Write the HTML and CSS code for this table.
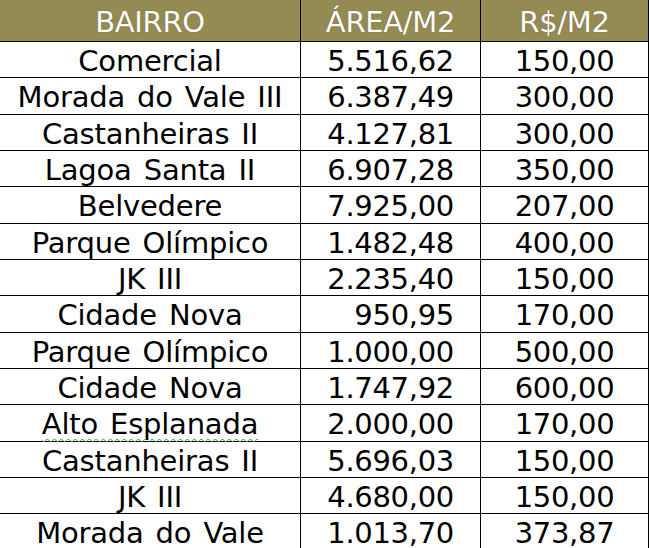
FILE: index.html
```html
<!DOCTYPE html>
<html lang="pt-BR">
<head>
<meta charset="utf-8">
<title>Bairros</title>
<link rel="stylesheet" href="styles.css">
</head>
<body>
<div class="sheet">
  <div class="cell head">BAIRRO</div>
  <div class="cell head">ÁREA/M2</div>
  <div class="cell head">R$/M2</div>

  <div class="cell name">Comercial</div><div class="cell area">5.516,62</div><div class="cell price">150,00</div>
  <div class="cell name">Morada do Vale III</div><div class="cell area">6.387,49</div><div class="cell price">300,00</div>
  <div class="cell name">Castanheiras II</div><div class="cell area">4.127,81</div><div class="cell price">300,00</div>
  <div class="cell name">Lagoa Santa II</div><div class="cell area">6.907,28</div><div class="cell price">350,00</div>
  <div class="cell name">Belvedere</div><div class="cell area">7.925,00</div><div class="cell price">207,00</div>
  <div class="cell name">Parque Olímpico</div><div class="cell area">1.482,48</div><div class="cell price">400,00</div>
  <div class="cell name">JK III</div><div class="cell area">2.235,40</div><div class="cell price">150,00</div>
  <div class="cell name">Cidade Nova</div><div class="cell area">950,95</div><div class="cell price">170,00</div>
  <div class="cell name">Parque Olímpico</div><div class="cell area">1.000,00</div><div class="cell price">500,00</div>
  <div class="cell name">Cidade Nova</div><div class="cell area">1.747,92</div><div class="cell price">600,00</div>
  <div class="cell name"><span class="spell">Alto Esplanada</span></div><div class="cell area">2.000,00</div><div class="cell price">170,00</div>
  <div class="cell name">Castanheiras II</div><div class="cell area">5.696,03</div><div class="cell price">150,00</div>
  <div class="cell name">JK III</div><div class="cell area">4.680,00</div><div class="cell price">150,00</div>
  <div class="cell name">Morada do Vale</div><div class="cell area">1.013,70</div><div class="cell price">373,87</div>
</div>
</body>
</html>
```
FILE: styles.css
```css
html, body {
  margin: 0;
  padding: 0;
  background: #ffffff;
  overflow: hidden;
}

.sheet {
  width: 648px;
  padding-right: 1px;
  background: #000000;
  display: grid;
  grid-template-columns: 300px 179px 167px;
  grid-template-rows: 41px repeat(14, 35.333px);
  column-gap: 1px;
  row-gap: 1px;
  font-family: "DejaVu Sans", Verdana, sans-serif;
  font-size: 29px;
  color: #000000;
}

.cell {
  background: #ffffff;
  display: flex;
  align-items: center;
  justify-content: center;
  white-space: nowrap;
  line-height: 1;
  padding-top: 4px;
  box-sizing: border-box;
}

.head {
  background: #948a54;
  color: #ffffff;
  padding-top: 3px;
  letter-spacing: -0.3px;
  text-shadow: 0 0 1px rgba(60, 50, 20, 0.5);
}

.name {
  word-spacing: 3px;
  letter-spacing: -0.2px;
}

.area {
  justify-content: flex-end;
  padding-right: 26px;
  letter-spacing: -0.3px;
}

.price {
  letter-spacing: -0.3px;
}

.spell {
  text-decoration: underline wavy #3aa03a;
  text-decoration-thickness: 1px;
  text-underline-offset: 4px;
}
```
